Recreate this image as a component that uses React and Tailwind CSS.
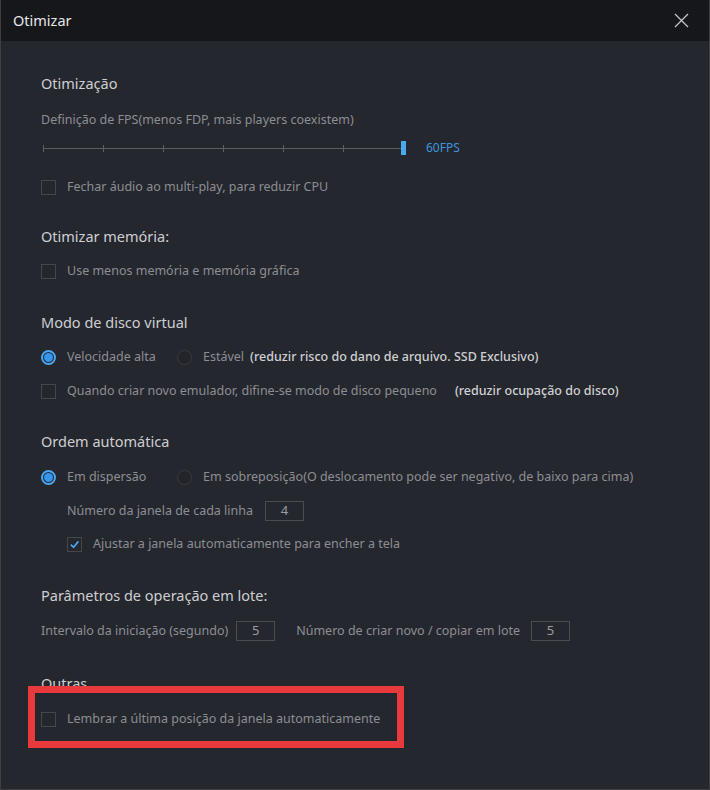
import React from "react";

const font = { fontFamily: '"Noto Sans", "Open Sans", sans-serif' };

function Checkbox({ checked }) {
  return (
    <span className="w-[15px] h-[15px] border border-[#45474d] flex items-center justify-center shrink-0">
      {checked && (
        <svg width="11" height="11" viewBox="0 0 12 12">
          <path d="M2 6.2 L5 9 L10.2 2.6" fill="none" stroke="#4aa8f0" strokeWidth="1.8" />
        </svg>
      )}
    </span>
  );
}

function Radio({ checked }) {
  if (checked)
    return (
      <span className="w-[15px] h-[15px] rounded-full border-2 border-[#4aa8f0] flex items-center justify-center shrink-0">
        <span className="w-[9px] h-[9px] rounded-full bg-[#3596ec]" />
      </span>
    );
  return <span className="w-[15px] h-[15px] rounded-full bg-[#22242a] border border-[#393b41] shrink-0" />;
}

function Box({ value }) {
  return (
    <span className="w-[39px] h-[20px] border border-[#4a4c52] flex items-center justify-center text-[13px] text-[#9a9ca1]">
      {value}
    </span>
  );
}

const heading = "h-[20px] flex items-center text-[14.5px] text-[#cdced1]";
const row = "h-[20px] flex items-center text-[12.5px] text-[#8c8e93]";
const strong = "text-[#cfd0d3] font-medium";

export default function App() {
  const ticks = [0, 60, 120, 180, 240, 300];
  return (
    <div
      className="relative w-[710px] h-[790px] bg-[#25272e] border-x border-b border-[#3d3f45] overflow-hidden"
      style={font}
    >
      {/* Title bar */}
      <div className="h-[41px] bg-[#16171b] flex items-center justify-between pl-[12px] pr-[20px]">
        <span className="text-[14.5px] text-[#e6e6e8]">Otimizar</span>
        <svg width="15" height="15" viewBox="0 0 15 15">
          <path d="M1 1 L14 14 M14 1 L1 14" stroke="#c4c5c8" strokeWidth="1.3" />
        </svg>
      </div>

      <div className="flex flex-col px-[40px]">
        <div className={`${heading} mt-[33px]`}>Otimização</div>
        <div className={`${row} mt-[16px]`}>Definição de FPS(menos FDP, mais players coexistem)</div>

        {/* FPS slider */}
        <div className="h-[20px] mt-[8px] flex items-center">
          <div className="relative w-[363px] h-[20px] ml-[2px]">
            <div className="absolute left-0 right-[5px] top-[10px] h-px bg-[#5c5e64]" />
            {ticks.map((t) => (
              <div key={t} className="absolute top-[7px] w-px h-[7px] bg-[#5c5e64]" style={{ left: t }} />
            ))}
            <div className="absolute right-0 top-[3px] w-[5px] h-[14px] bg-[#4aa9ea]" />
          </div>
          <span className="ml-[20px] text-[12px] text-[#3b95dc]">60FPS</span>
        </div>

        <div className={`${row} mt-[19px] gap-[11px]`}>
          <Checkbox />
          <span>Fechar áudio ao multi-play, para reduzir CPU</span>
        </div>

        <div className={`${heading} mt-[30px]`}>Otimizar memória:</div>
        <div className={`${row} mt-[14px] gap-[11px]`}>
          <Checkbox />
          <span>Use menos memória e memória gráfica</span>
        </div>

        <div className={`${heading} mt-[32px]`}>Modo de disco virtual</div>
        <div className={`${row} mt-[14px]`}>
          <Radio checked />
          <span className="ml-[11px] w-[110px]">Velocidade alta</span>
          <Radio />
          <span className="ml-[11px]">Estável</span>
          <span className={`ml-[6px] ${strong}`}>(reduzir risco do dano de arquivo. SSD Exclusivo)</span>
        </div>
        <div className={`${row} mt-[14px]`}>
          <Checkbox />
          <span className="ml-[11px]">Quando criar novo emulador, difine-se modo de disco pequeno</span>
          <span className={`ml-[18px] ${strong}`}>(reduzir ocupação do disco)</span>
        </div>

        <div className={`${heading} mt-[31px]`}>Ordem automática</div>
        <div className={`${row} mt-[15px]`}>
          <Radio checked />
          <span className="ml-[11px] w-[110px]">Em dispersão</span>
          <Radio />
          <span className="ml-[11px]">Em sobreposição(O deslocamento pode ser negativo, de baixo para cima)</span>
        </div>
        <div className={`${row} mt-[14px] pl-[26px] gap-[12px]`}>
          <span>Número da janela de cada linha</span>
          <Box value="4" />
        </div>
        <div className={`${row} mt-[13px] pl-[26px] gap-[11px]`}>
          <Checkbox checked />
          <span>Ajustar a janela automaticamente para encher a tela</span>
        </div>

        <div className={`${heading} mt-[32px]`}>Parâmetros de operação em lote:</div>
        <div className={`${row} mt-[15px]`}>
          <span>Intervalo da iniciação (segundo)</span>
          <span className="ml-[8px]"><Box value="5" /></span>
          <span className="ml-[21px]">Número de criar novo / copiar em lote</span>
          <span className="ml-[11px]"><Box value="5" /></span>
        </div>

        <div className={`${heading} mt-[33px]`}>Outras</div>
        <div className={`${row} mt-[15px] gap-[11px]`}>
          <Checkbox />
          <span>Lembrar a última posição da janela automaticamente</span>
        </div>
      </div>

      {/* highlight annotation */}
      <div className="absolute left-[27px] top-[686px] w-[376px] h-[62px] border-[7px] border-[#e8393c]" />
    </div>
  );
}
